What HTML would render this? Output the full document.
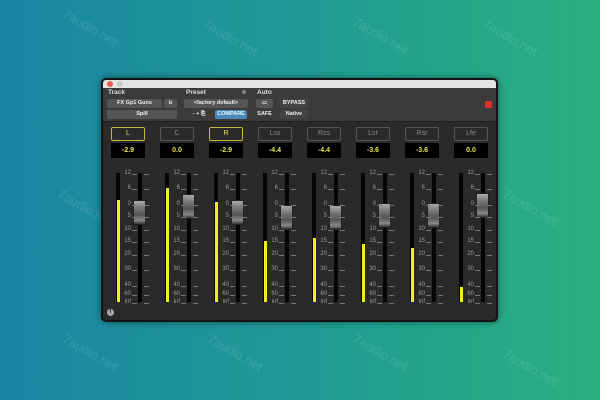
<!DOCTYPE html><html><head><style>
*{margin:0;padding:0;box-sizing:border-box}
body{width:600px;height:400px;overflow:hidden;background:linear-gradient(90deg,#1a86a3 0%,#1f9a95 50%,#2bb07f 100%);font-family:"Liberation Sans",sans-serif;position:relative}
.wm{position:absolute;color:rgba(255,255,255,.13);font-size:13px;transform:rotate(30deg)}
#win{position:absolute;left:102px;top:79px;width:395px;height:242px;background:#2a2a2a;border-radius:4px;overflow:hidden;box-shadow:0 0 0 1px #111,0 0 8px rgba(0,0,0,.6);border:1px solid #151515}
#tb{position:absolute;left:0;top:0;width:100%;height:8px;background:#e4e4e4}
.dot{position:absolute;top:1px;width:6px;height:6px;border-radius:3px}
#hd{position:absolute;left:0;top:8px;width:100%;height:34px;background:#3b3b3b;border-bottom:1px solid #222}
.lb{position:absolute;top:1px;font-size:6.5px;font-weight:bold;color:#ddd}
.bt{position:absolute;height:9px;background:#555;border-radius:2px;font-size:5.5px;color:#eee;text-align:center;line-height:9px;font-weight:bold}
.ch{position:absolute;top:0;width:49px;height:240px}
.nm{position:absolute;left:8px;top:47px;width:34px;height:14px;border:1px solid #555;border-radius:2px;color:#888;font-size:7px;text-align:center;line-height:12px}
.nm.on{border-color:#c9b53a;color:#e8e060}
.val{position:absolute;left:8px;top:63px;width:34px;height:15px;background:#000;color:#e8e650;font-size:7px;font-weight:bold;text-align:center;line-height:15px}
.mt{position:absolute;left:13px;top:93px;width:4px;height:129px;background:#050505}
.yl{position:absolute;left:0.5px;bottom:0;width:3px;background:#f2f020}
.tr{position:absolute;left:35px;top:93px;width:4px;height:129px;background:#050505}
.kn{position:absolute;left:30px;width:13px;height:25px;border-radius:1px;background:linear-gradient(#aaa,#777 30%,#555 60%,#888 85%,#333);border:1px solid #222}
.sc{position:absolute;left:18px;width:18px;font-size:6px;color:#999;text-align:right}
.dsh{position:absolute;left:41px;width:5px;height:1px;background:#777}
.tn{position:absolute;left:8px;font-size:3px;color:#777}
</style></head><body>
<div class="wm" style="left:60px;top:20px">7audio.net</div>
<div class="wm" style="left:200px;top:30px">7audio.net</div>
<div class="wm" style="left:350px;top:28px">7audio.net</div>
<div class="wm" style="left:480px;top:30px">7audio.net</div>
<div class="wm" style="left:55px;top:200px">7audio.net</div>
<div class="wm" style="left:500px;top:200px">7audio.net</div>
<div class="wm" style="left:60px;top:345px">7audio.net</div>
<div class="wm" style="left:205px;top:345px">7audio.net</div>
<div class="wm" style="left:350px;top:345px">7audio.net</div>
<div class="wm" style="left:500px;top:360px">7audio.net</div>
<div id="win">
<div id="tb"><div class="dot" style="left:4px;background:#ec5a50"></div><div class="dot" style="left:14px;background:#c8c8c8"></div></div>
<div id="hd">
<div class="lb" style="left:5px">Track</div><div class="lb" style="left:83px">Preset</div><div class="lb" style="left:154px">Auto</div>
<div style="position:absolute;left:139px;top:2px;width:4px;height:4px;border-radius:2px;background:#888"></div>
<div class="bt" style="left:4px;top:11px;width:55px">FX Gp1 Guns</div>
<div class="bt" style="left:61px;top:11px;width:13px">b</div>
<div class="bt" style="left:4px;top:22px;width:70px">Spill</div>
<div class="bt" style="left:81px;top:11px;width:64px">&lt;factory default&gt;</div>
<div class="bt" style="left:81px;top:22px;width:30px;background:none">- + ⎘</div>
<div class="bt" style="left:112px;top:22px;width:32px;background:#4d86ba;color:#dff">COMPARE</div>
<div class="bt" style="left:153px;top:11px;width:17px">▭</div>
<div class="bt" style="left:153px;top:22px;width:17px;background:none">SAFE</div>
<div class="bt" style="left:177px;top:11px;width:28px;background:#444">BYPASS</div>
<div class="bt" style="left:177px;top:22px;width:28px;background:#444">Native</div>
<div style="position:absolute;left:382px;top:13px;width:7px;height:7px;background:#e03030;border-radius:1px"></div>
</div>
<div class="ch" style="left:0"><div class="nm on">L</div><div class="val">-2.9</div><div class="mt"><div class="yl" style="height:102px"></div></div><div class="tr"></div><div class="kn" style="top:120px"></div></div>
<div class="ch" style="left:49px"><div class="nm">C</div><div class="val">0.0</div><div class="mt"><div class="yl" style="height:114px"></div></div><div class="tr"></div><div class="kn" style="top:114px"></div></div>
<div class="ch" style="left:98px"><div class="nm on">R</div><div class="val">-2.9</div><div class="mt"><div class="yl" style="height:100px"></div></div><div class="tr"></div><div class="kn" style="top:120px"></div></div>
<div class="ch" style="left:147px"><div class="nm">Lss</div><div class="val">-4.4</div><div class="mt"><div class="yl" style="height:61px"></div></div><div class="tr"></div><div class="kn" style="top:125px"></div></div>
<div class="ch" style="left:196px"><div class="nm">Rss</div><div class="val">-4.4</div><div class="mt"><div class="yl" style="height:64px"></div></div><div class="tr"></div><div class="kn" style="top:125px"></div></div>
<div class="ch" style="left:245px"><div class="nm">Lsr</div><div class="val">-3.6</div><div class="mt"><div class="yl" style="height:58px"></div></div><div class="tr"></div><div class="kn" style="top:123px"></div></div>
<div class="ch" style="left:294px"><div class="nm">Rsr</div><div class="val">-3.6</div><div class="mt"><div class="yl" style="height:54px"></div></div><div class="tr"></div><div class="kn" style="top:123px"></div></div>
<div class="ch" style="left:343px"><div class="nm">Lfe</div><div class="val">0.0</div><div class="mt"><div class="yl" style="height:15px"></div></div><div class="tr"></div><div class="kn" style="top:113px"></div></div>
<div id="scales"></div>
<div style="position:absolute;left:4px;top:229px;width:7px;height:7px;border-radius:4px;background:#aaa;color:#222;font-size:6px;text-align:center;line-height:7px;font-weight:bold">i</div>
</div>
<script>
var s='',lab=[['12',94],['6',109],['0',125],['5',137],['10',150],['15',162],['20',175],['30',190],['40',206],['60',215],['inf',223]];
for(var c=0;c<8;c++){var x=c*49;for(var i=0;i<lab.length;i++){var y=lab[i][1];
s+='<div class="sc" style="left:'+(x+14)+'px;top:'+(y-4)+'px;width:14px">'+lab[i][0]+'</div><div class="dsh" style="left:'+(x+29)+'px;top:'+y+'px;width:5px"></div><div class="dsh" style="left:'+(x+41)+'px;top:'+y+'px"></div><div class="tn" style="left:'+(x+8)+'px;top:'+(y-1)+'px">·</div>';}}
document.getElementById('scales').innerHTML=s;
</script>
</body></html>
